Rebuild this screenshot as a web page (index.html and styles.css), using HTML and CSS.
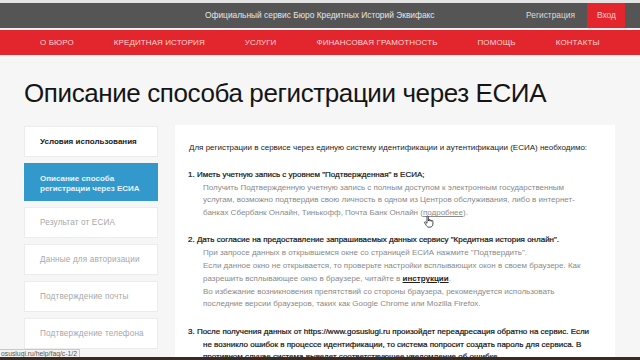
FILE: index.html
```html
<!DOCTYPE html>
<html lang="ru">
<head>
<meta charset="utf-8">
<title>Описание способа регистрации через ЕСИА</title>
<link rel="stylesheet" href="styles.css">
</head>
<body>
<div class="topline"></div>
<header class="topbar">
  <div class="slogan">Официальный сервис Бюро Кредитных Историй Эквифакс</div>
  <div class="auth">
    <a class="reg" href="#">Регистрация</a>
    <a class="login" href="#">Вход</a>
  </div>
</header>
<div class="sep"></div>
<nav class="menu">
  <a href="#">О БЮРО</a>
  <a href="#">КРЕДИТНАЯ ИСТОРИЯ</a>
  <a href="#">УСЛУГИ</a>
  <a href="#">ФИНАНСОВАЯ ГРАМОТНОСТЬ</a>
  <a href="#">ПОМОЩЬ</a>
  <a href="#">КОНТАКТЫ</a>
</nav>
<main class="page">
  <h1 class="title">Описание способа регистрации через ЕСИА</h1>
  <div class="cols">
    <aside class="side">
      <a class="side-item dark" href="#">Условия использования</a>
      <a class="side-item active" href="#">Описание способа<br>регистрации через ЕСИА</a>
      <a class="side-item" href="#">Результат от ЕСИА</a>
      <a class="side-item" href="#">Данные для авторизации</a>
      <a class="side-item" href="#">Подтверждение почты</a>
      <a class="side-item" href="#">Подтверждение телефона</a>
    </aside>
    <section class="card">
      <p class="lead">Для регистрации в сервисе через единую систему идентификации и аутентификации (ЕСИА) необходимо:</p>
      <div class="step">
        <p class="head">1. Иметь учетную запись с уровнем "Подтвержденная" в ЕСИА;</p>
        <p class="sub">Получить Подтвержденную учетную запись с полным доступом к электронным государственным услугам, возможно подтвердив свою личность в одном из Центров обслуживания, либо в интернет-банках Сбербанк Онлайн, Тинькофф, Почта Банк Онлайн (<a class="more" href="#">подробнее</a>).</p>
      </div>
      <div class="step">
        <p class="head">2. Дать согласие на предоставление запрашиваемых данных сервису "Кредитная история онлайн".</p>
        <p class="sub">При запросе данных в открывшемся окне со страницей ЕСИА нажмите "Подтвердить".</p>
        <p class="sub">Если данное окно не открывается, то проверьте настройки всплывающих окон в своем браузере. Как разрешить всплывающее окно в браузере, читайте в <a class="instr" href="#">инструкции</a>.</p>
        <p class="sub">Во избежание возникновения препятствий со стороны браузера, рекомендуется использовать последние версии браузеров, таких как Google Chrome или Mozilla Firefox.</p>
      </div>
      <div class="step">
        <p class="head hang">3. После получения данных от https://www.gosuslugi.ru произойдет переадресация обратно на сервис. Если не возникло ошибок в процессе идентификации, то система попросит создать пароль для сервиса. В противном случае система выведет соответствующее уведомление об ошибке.</p>
      </div>
    </section>
  </div>
</main>
<svg class="cursor" width="12" height="13" viewBox="0 0 12 13"><path d="M4 1.5c0-.8 1.4-.8 1.4 0V6l.2-1c.2-.7 1.3-.6 1.3.1v1l.2-.7c.2-.7 1.3-.6 1.3.1v.8l.2-.4c.3-.6 1.3-.4 1.3.3V9c0 1.8-1.2 3.2-3 3.2H6c-1.2 0-2-.6-2.6-1.6L1.6 7.8c-.4-.7.5-1.3 1-.8L4 8.3z" fill="#fff" stroke="#222" stroke-width=".8"/></svg>
<div class="status">osuslugi.ru/help/faq/c-1/2</div>
<div class="bottomband"></div>
</body>
</html>
```
FILE: styles.css
```css
* { box-sizing: border-box; }
html, body { margin: 0; padding: 0; }
body {
  width: 640px;
  height: 360px;
  overflow: hidden;
  background: #f6f6f6;
  font-family: "Liberation Sans", Arial, sans-serif;
  position: relative;
}
a { text-decoration: none; color: inherit; }
p { margin: 0; }

.topline { height: 3px; background: #e4e4e4; }
.topbar {
  height: 25px;
  background: #555555;
  display: flex;
  align-items: stretch;
  padding-left: 205px;
  padding-right: 15px;
}
.slogan {
  color: #e6e6e6;
  font-size: 8.4px;
  line-height: 25px;
}
.auth { margin-left: auto; display: flex; align-items: stretch; }
.reg { color: #dcdcdc; font-size: 8.4px; line-height: 25px; padding-right: 12px; }
.login {
  background: #e3262e;
  color: #f6d0d0;
  font-size: 8.4px;
  line-height: 24px;
  padding: 0 10px;
  width: 38px;
}
.sep { height: 2px; background: #f3f3f3; }
.menu {
  height: 25px;
  background: #e3262e;
  display: flex;
  align-items: center;
  gap: 40px;
  padding-left: 40px;
}
.menu a { color: #fbd6d6; font-size: 8px; letter-spacing: 0.1px; }

.page { padding: 0 24px 0 24px; }
.title {
  margin: 0;
  padding-top: 23px;
  height: 70px;
  font-weight: normal;
  font-size: 26px;
  line-height: 30px;
  color: #151515;
  letter-spacing: -0.4px;
}
.cols { display: flex; align-items: flex-start; gap: 17px; }
.side {
  width: 134px;
  flex: none;
  display: flex;
  flex-direction: column;
  gap: 6px;
  padding-top: 1px;
}
.side-item {
  display: block;
  background: #ffffff;
  border: 1px solid #ececec;
  height: 31px;
  padding: 0 0 0 15px;
  font-size: 8.2px;
  line-height: 29px;
  color: #a8a8a8;
  letter-spacing: 0.15px;
}
.side-item.dark { color: #1a1a1a; font-weight: bold; letter-spacing: 0; font-size: 8px; }
.side-item.active {
  background: #3398cc;
  border-color: #3398cc;
  color: #eaf4fa;
  font-weight: bold;
  font-size: 8px;
  height: 38px;
  line-height: 9.5px;
  padding-top: 10px;
  letter-spacing: 0;
}
.card {
  width: 440px;
  background: #ffffff;
  padding: 17px 24px 0 13px;
  height: 300px;
  font-size: 8px;
  line-height: 12.8px;
}
.lead { color: #222; padding-left: 1px; margin-bottom: 14px; }
.step { margin-bottom: 14.5px; }
.head { color: #111; -webkit-text-stroke: 0.2px #111; }
.head.hang { padding-left: 15px; text-indent: -15px; }
.sub { color: #8a8a8a; padding-left: 15px; }
.more { text-decoration: underline; color: #8a8a8a; }
.instr { text-decoration: underline; color: #1e1e1e; font-weight: bold; }

.cursor { position: absolute; left: 423px; top: 215px; }
.status {
  position: absolute;
  left: 0;
  top: 349px;
  height: 10px;
  padding: 0 2px 0 1px;
  background: #f3f3f3;
  border: 1px solid #c8c8c8;
  border-left: none;
  font-size: 6.8px;
  line-height: 8px;
  color: #555;
}
.bottomband {
  position: absolute;
  left: 0;
  right: 0;
  bottom: 0;
  height: 3px;
  background: #3b2a22;
}
```
